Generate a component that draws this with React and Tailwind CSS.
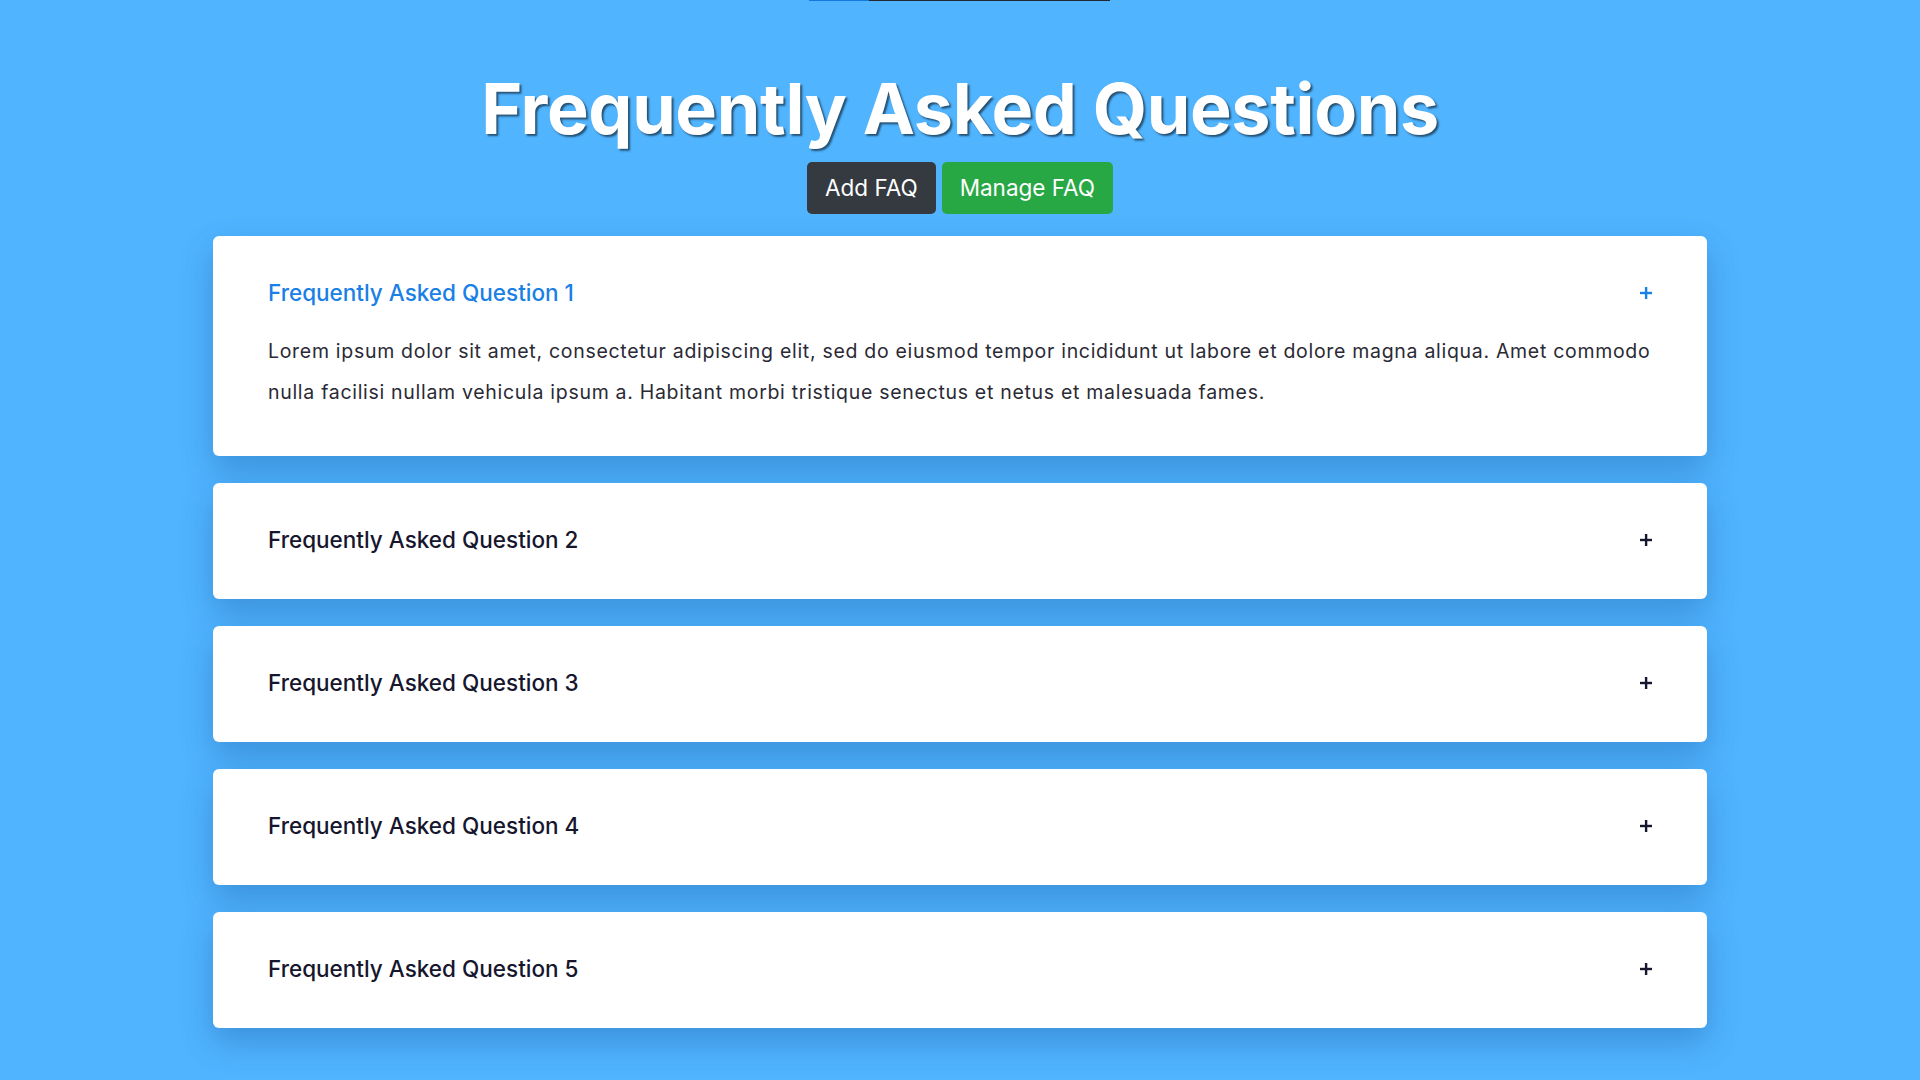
import { useState } from 'react';

const faqs = [
  {
    id: 1,
    question: 'Frequently Asked Question 1',
    answer:
      'Lorem ipsum dolor sit amet, consectetur adipiscing elit, sed do eiusmod tempor incididunt ut labore et dolore magna aliqua. Amet commodo nulla facilisi nullam vehicula ipsum a. Habitant morbi tristique senectus et netus et malesuada fames.',
  },
  { id: 2, question: 'Frequently Asked Question 2', answer: 'Lorem ipsum dolor sit amet, consectetur adipiscing elit.' },
  { id: 3, question: 'Frequently Asked Question 3', answer: 'Lorem ipsum dolor sit amet, consectetur adipiscing elit.' },
  { id: 4, question: 'Frequently Asked Question 4', answer: 'Lorem ipsum dolor sit amet, consectetur adipiscing elit.' },
  { id: 5, question: 'Frequently Asked Question 5', answer: 'Lorem ipsum dolor sit amet, consectetur adipiscing elit.' },
];

const PlusIcon = ({ className }) => (
  <svg viewBox="0 0 12 12" className={className} fill="currentColor">
    <rect x="4.9" y="0" width="2.4" height="12" />
    <rect x="0" y="4.8" width="12" height="2.4" />
  </svg>
);

const FaqItem = ({ faq, open, onToggle }) => (
  <div className="bg-white rounded-[6px] shadow-[0_14px_32px_rgba(20,70,140,0.32)] px-[55px] pt-[41px] pb-[43px]">
    <button
      onClick={onToggle}
      className="w-full flex items-center justify-between text-left h-[32px] cursor-pointer"
    >
      <span
        className={`text-[22.5px] font-medium ${open ? 'text-[#1a80e6]' : 'text-[#16162e]'}`}
      >
        {faq.question}
      </span>
      <PlusIcon className={`w-[12px] h-[12px] ${open ? 'text-[#1a80e6]' : 'text-[#16162e]'}`} />
    </button>
    {open && (
      <p className="mt-[22px] text-[19.5px] tracking-[0.7px] leading-[41px] text-[#2a2a35]">
        {faq.answer}
      </p>
    )}
  </div>
);

const App = () => {
  const [openId, setOpenId] = useState(1);

  return (
    <div className="min-h-screen bg-[#50b4ff] font-['Inter','Noto_Sans',sans-serif] pb-[53px]">
      {/* top strip */}
      <div className="flex h-[1px]">
        <div className="ml-[809px] w-[60px] bg-[#1479dc]" />
        <div className="w-[241px] bg-[#222831]" />
      </div>

      <div className="flex flex-col items-center">
        <h1 className="mt-[65px] text-[70px] leading-[86px] font-bold text-white tracking-[-0.35px] [text-shadow:2px_2px_2px_rgba(0,0,0,0.55)]">
          Frequently Asked Questions
        </h1>
        <div className="mt-[10px] flex gap-[6px]">
          <button className="h-[52px] px-[18px] rounded-[5px] bg-[#343a40] text-white text-[22.5px]">
            Add FAQ
          </button>
          <button className="h-[52px] px-[18px] rounded-[5px] bg-[#28a745] text-white text-[22.5px]">
            Manage FAQ
          </button>
        </div>
      </div>

      <main className="w-[1494px] mx-auto mt-[22px] flex flex-col gap-[27px]">
        {faqs.map((faq) => (
          <FaqItem
            key={faq.id}
            faq={faq}
            open={openId === faq.id}
            onToggle={() => setOpenId(openId === faq.id ? null : faq.id)}
          />
        ))}
      </main>
    </div>
  );
};

export default App;
